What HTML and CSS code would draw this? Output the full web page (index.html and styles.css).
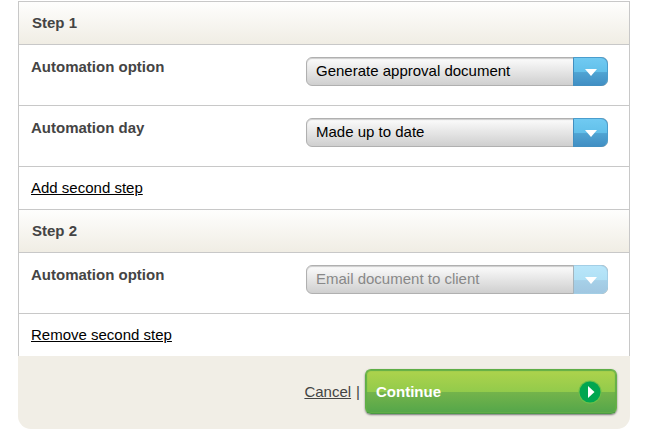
FILE: index.html
```
<!DOCTYPE html>
<html lang="en">
<head>
    <meta charset="UTF-8">
    <meta name="viewport" content="width=device-width, initial-scale=1.0">
    <title>Automation steps</title>
    <link rel="stylesheet" href="styles.css">
</head>
<body>
    <form class="panel">
        <!-- Step 1 -->
        <section class="step">
            <h2 class="step-title">Step 1</h2>
            <div class="field">
                <label for="option1">Automation option</label>
                <div class="select-box">
                    <select id="option1">
                        <option>Generate approval document</option>
                        <option>Email document to client</option>
                    </select>
                    <span class="arrow"><svg width="12" height="7" viewBox="0 0 12 7"><path d="M0 0h12L6 7z" fill="#fff"/></svg></span>
                </div>
            </div>
            <div class="field">
                <label for="day1">Automation day</label>
                <div class="select-box">
                    <select id="day1">
                        <option>Made up to date</option>
                    </select>
                    <span class="arrow"><svg width="12" height="7" viewBox="0 0 12 7"><path d="M0 0h12L6 7z" fill="#fff"/></svg></span>
                </div>
            </div>
            <div class="step-link"><a href="#">Add second step</a></div>
        </section>

        <!-- Step 2 -->
        <section class="step">
            <h2 class="step-title">Step 2</h2>
            <div class="field">
                <label for="option2">Automation option</label>
                <div class="select-box">
                    <select id="option2" disabled>
                        <option>Email document to client</option>
                    </select>
                    <span class="arrow"><svg width="12" height="7" viewBox="0 0 12 7"><path d="M0 0h12L6 7z" fill="#fff"/></svg></span>
                </div>
            </div>
            <div class="step-link"><a href="#">Remove second step</a></div>
        </section>

        <div class="footer">
            <a class="cancel" href="#">Cancel</a>
            <span>|</span>
            <button type="submit" class="continue-button">
                Continue
                <svg width="24" height="24" viewBox="0 0 24 24">
                    <circle cx="12" cy="12" r="11.5" fill="#6cc04a"/>
                    <circle cx="12" cy="12" r="10.5" fill="#00a650"/>
                    <path d="M10 6l6.5 6-6.5 6z" fill="#fff"/>
                </svg>
            </button>
        </div>
    </form>
</body>
</html>
```

FILE: styles.css
```
* {
    box-sizing: border-box;
}

body {
    margin: 1px 30px 0 18px;
    background: #fff;
    color: #444;
    font-family: "Liberation Sans", Arial, sans-serif;
    font-size: 15px;
    line-height: 18px;
}

.step {
    border: 1px solid #c8c8c8;
    border-width: 0 1px;
}

.step-title,
.field,
.step-link {
    border-top: 1px solid #c8c8c8;
}

.step-title {
    margin: 0;
    padding: 12px 13px;
    font-size: 15px;
    line-height: 18px;
    background: linear-gradient(#fefefd, #f0ede4);
}

.field {
    display: flex;
    justify-content: space-between;
    padding: 12px 21px 19px 12px;
}

.field label {
    padding-top: 1px;
    font-weight: bold;
}

.select-box {
    position: relative;
    flex: 0 1 302px;
}

.select-box select {
    display: block;
    width: 100%;
    height: 29px;
    padding: 0 44px 2px 9px;
    appearance: none;
    border: 1px solid #b0b0b0;
    border-radius: 6px;
    background: linear-gradient(#fcfcfc, #cfcfcf);
    box-shadow: inset 0 1px 1px #ccc;
    color: #000;
    font: inherit;
}

.select-box select:disabled {
    color: #888;
    opacity: 1;
}

/* blue end of the drop-down, clicks go through to the select */
.arrow {
    position: absolute;
    top: 0;
    right: 0;
    bottom: 0;
    width: 35px;
    display: flex;
    align-items: center;
    justify-content: center;
    padding-top: 2px;
    border: 1px solid #4a9dcd;
    border-left-color: #428fc0;
    border-bottom-color: #428fc0;
    border-radius: 0 7px 7px 0;
    background: linear-gradient(#70caf2, #62c0ea 50%, #4fa3d2 54%, #418fc4);
    pointer-events: none;
}

select:disabled + .arrow {
    border-color: #a3cee5;
    border-left-color: #a5b4bc;
    background: linear-gradient(#b8e6fa, #b0e0f5 50%, #a6d0e8 54%, #a0c7e1);
}

.step-link {
    padding: 12px;
}

.step-link a {
    color: #000;
}

.footer {
    display: flex;
    align-items: center;
    justify-content: flex-end;
    gap: 5px;
    padding: 13px 13px 15px;
    border-radius: 0 0 13px 13px;
    background: #f1eee6;
}

.cancel {
    color: #444;
}

.continue-button {
    display: flex;
    align-items: center;
    justify-content: space-between;
    flex: 0 1 252px;
    height: 45px;
    padding: 0 14px 0 10px;
    border: 1px solid #57a845;
    border-color: #5fae46 #68b04a #4b9a44 #5fae46;
    border-radius: 6px;
    background: linear-gradient(#aed34c, #93cb4b 50%, #75b44b 50%, #54a64a);
    box-shadow: inset 0 0 1px 1px #62ae48, 0 1px 2px #777;
    color: #fff;
    font: inherit;
    font-weight: bold;
    cursor: pointer;
}
```
